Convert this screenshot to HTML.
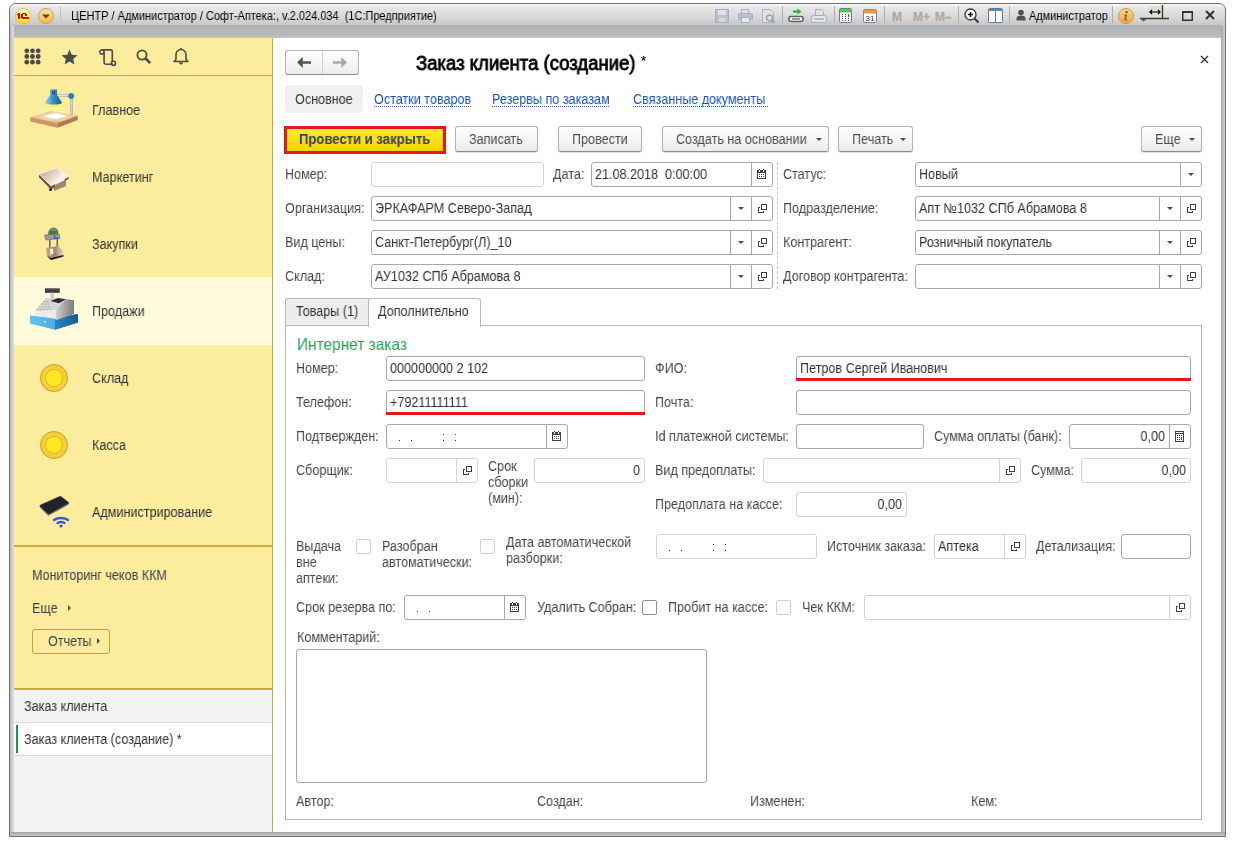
<!DOCTYPE html><html><head><meta charset="utf-8"><style>
html,body{margin:0;padding:0}
body{width:1238px;height:844px;position:relative;overflow:hidden;background:#fff;font-family:"Liberation Sans",sans-serif}
.a{position:absolute;box-sizing:border-box}
.t{position:absolute;white-space:pre;line-height:20px;transform-origin:0 0;will-change:transform;font-family:"Liberation Sans",sans-serif}
</style></head><body>
<div class="a" style="left:9px;top:3px;width:1217px;height:834px;border:1px solid #6f6f6f;border-radius:7px 7px 0 0;background:#c6c6c8"></div>
<div class="a" style="left:10px;top:25px;width:4px;height:807px;background:linear-gradient(90deg,#bdbdbf,#c9c9cb 2px,#dcdcdc 3px)"></div>
<div class="a" style="left:1221px;top:25px;width:4px;height:807px;background:linear-gradient(90deg,#a4a5a9,#b6b7bb 2px,#cdcdcf 3px)"></div>
<div class="a" style="left:10px;top:4px;width:1215px;height:22px;border-radius:6px 6px 0 0;background:linear-gradient(#fbfbfb,#e8e8e8 3px,#d8d8d9 60%,#c5c5c7)"></div>
<div class="a" style="left:14px;top:25px;width:1207px;height:13px;background:linear-gradient(#adaeb2,#b5b6ba 40%,#b9babd 85%,#c6c7ca)"></div>
<div class="a" style="left:10px;top:832px;width:1215px;height:4px;background:linear-gradient(#9fa0a4,#b4b5b9 50%,#c9c9cc)"></div>
<div class="t" style="left:71px;top:6px;font-size:12px;transform:scaleX(.915);color:#000">ЦЕНТР / Администратор / Софт-Аптека:, v.2.024.034  (1С:Предприятие)</div>
<div class="a" style="left:14px;top:38px;width:259px;height:651px;background:#fbec9e"></div>
<div class="a" style="left:272px;top:38px;width:1px;height:794px;background:#c9ad3a"></div>
<div class="a" style="left:14px;top:75px;width:258px;height:1px;background:#c9ad3a"></div>
<div class="a" style="left:14px;top:277px;width:258px;height:68px;background:#fffcdc"></div>
<div class="a" style="left:14px;top:545px;width:258px;height:2px;background:#c9ad3a"></div>
<div class="a" style="left:14px;top:688px;width:258px;height:2px;background:#c9ad3a"></div>
<div class="a" style="left:14px;top:690px;width:258px;height:142px;background:#f2f2f2"></div>
<div class="a" style="left:14px;top:722px;width:258px;height:1px;background:#dadada"></div>
<div class="a" style="left:14px;top:723px;width:258px;height:32px;background:#fff"></div>
<div class="a" style="left:14px;top:755px;width:258px;height:1px;background:#dadada"></div>
<div class="a" style="left:16px;top:725px;width:2px;height:28px;background:#149b4a"></div>
<div class="t" style="left:92px;top:100px;font-size:14px;transform:scaleX(.9);color:#333;">Главное</div>
<div class="t" style="left:92px;top:167px;font-size:14px;transform:scaleX(.9);color:#333;">Маркетинг</div>
<div class="t" style="left:92px;top:234px;font-size:14px;transform:scaleX(.9);color:#333;">Закупки</div>
<div class="t" style="left:92px;top:301px;font-size:14px;transform:scaleX(.9);color:#333;">Продажи</div>
<div class="t" style="left:92px;top:368px;font-size:14px;transform:scaleX(.9);color:#333;">Склад</div>
<div class="t" style="left:92px;top:435px;font-size:14px;transform:scaleX(.9);color:#333;">Касса</div>
<div class="t" style="left:92px;top:502px;font-size:14px;transform:scaleX(.9);color:#333;">Администрирование</div>
<div class="t" style="left:32px;top:565px;font-size:14px;transform:scaleX(.9);color:#3d4152;">Мониторинг чеков ККМ</div>
<div class="t" style="left:32px;top:598px;font-size:14px;transform:scaleX(.9);color:#3d4152;">Еще</div>
<div class="a" style="left:32px;top:629px;width:78px;height:25px;border:1px solid #c4a31a;border-radius:3px"></div>
<div class="t" style="left:48px;top:631px;font-size:14px;transform:scaleX(.9);color:#3d4152;">Отчеты</div>
<div class="t" style="left:24px;top:696px;font-size:14px;transform:scaleX(.9);color:#333;">Заказ клиента</div>
<div class="t" style="left:24px;top:729px;font-size:14px;transform:scaleX(.9);color:#333;">Заказ клиента (создание) *</div>
<div class="a" style="left:273px;top:38px;width:948px;height:794px;background:#fff"></div>
<div class="a" style="left:285px;top:50px;width:74px;height:25px;border:1px solid #b3b3b3;border-bottom-color:#8c8c8c;border-radius:3px;background:linear-gradient(#fff,#ececec)"></div>
<div class="a" style="left:322px;top:51px;width:1px;height:23px;background:#d0d0d0"></div>
<div class="t" style="left:416px;top:48px;line-height:30px;font-size:19.5px;transform:scaleX(.95);-webkit-text-stroke:.8px #000;color:#000">Заказ клиента (создание)</div>
<div class="t" style="left:641px;top:51px;line-height:20px;font-size:13px;color:#000;-webkit-text-stroke:.2px #000">*</div>
<svg class="a" style="left:1200px;top:55px" width="9" height="9" viewBox="0 0 9 9"><path d="M1 1l7 7M8 1l-7 7" stroke="#333" stroke-width="1.3"/></svg>
<div class="a" style="left:285px;top:85px;width:78px;height:28px;background:#f0f0f0;border-radius:4px"></div>
<div class="t" style="left:295px;top:89px;font-size:14px;transform:scaleX(.9);color:#333;">Основное</div>
<div class="t" style="left:374px;top:89px;font-size:14px;transform:scaleX(.9);color:#1c4fc0">Остатки товаров</div>
<div class="a" style="left:374px;top:106px;width:98px;height:1px;background:repeating-linear-gradient(90deg,#3a6ad0 0 1px,transparent 1px 2px)"></div>
<div class="t" style="left:492px;top:89px;font-size:14px;transform:scaleX(.9);color:#1c4fc0">Резервы по заказам</div>
<div class="a" style="left:492px;top:106px;width:117px;height:1px;background:repeating-linear-gradient(90deg,#3a6ad0 0 1px,transparent 1px 2px)"></div>
<div class="t" style="left:633px;top:89px;font-size:14px;transform:scaleX(.9);color:#1c4fc0">Связанные документы</div>
<div class="a" style="left:633px;top:106px;width:135px;height:1px;background:repeating-linear-gradient(90deg,#3a6ad0 0 1px,transparent 1px 2px)"></div>
<div class="a" style="left:284px;top:126px;width:162px;height:28px;border:3px solid #e5161d;background:linear-gradient(#ffe930,#f5d400)"></div>
<div class="t" style="left:299px;top:129px;font-size:14px;font-weight:bold;transform:scaleX(.935);color:#3b3f58">Провести и закрыть</div>
<div class="a" style="left:455px;top:126px;width:83px;height:26px;border:1px solid #b3b3b3;border-bottom-color:#8c8c8c;border-radius:3px;background:linear-gradient(#fff,#ececec);box-shadow:0 1px 1px rgba(0,0,0,.12)"></div>
<div class="t" style="left:469px;top:129px;font-size:14px;transform:scaleX(.9);color:#4d4d4d;">Записать</div>
<div class="a" style="left:558px;top:126px;width:84px;height:26px;border:1px solid #b3b3b3;border-bottom-color:#8c8c8c;border-radius:3px;background:linear-gradient(#fff,#ececec);box-shadow:0 1px 1px rgba(0,0,0,.12)"></div>
<div class="t" style="left:572px;top:129px;font-size:14px;transform:scaleX(.9);color:#4d4d4d;">Провести</div>
<div class="a" style="left:662px;top:126px;width:167px;height:26px;border:1px solid #b3b3b3;border-bottom-color:#8c8c8c;border-radius:3px;background:linear-gradient(#fff,#ececec);box-shadow:0 1px 1px rgba(0,0,0,.12)"></div>
<div class="t" style="left:676px;top:129px;font-size:14px;transform:scaleX(.9);color:#4d4d4d;">Создать на основании</div>
<div class="a" style="left:816px;top:138px;width:0;height:0;border-left:3px solid transparent;border-right:3px solid transparent;border-top:3px solid #4d4d4d"></div>
<div class="a" style="left:838px;top:126px;width:75px;height:26px;border:1px solid #b3b3b3;border-bottom-color:#8c8c8c;border-radius:3px;background:linear-gradient(#fff,#ececec);box-shadow:0 1px 1px rgba(0,0,0,.12)"></div>
<div class="t" style="left:852px;top:129px;font-size:14px;transform:scaleX(.9);color:#4d4d4d;">Печать</div>
<div class="a" style="left:900px;top:138px;width:0;height:0;border-left:3px solid transparent;border-right:3px solid transparent;border-top:3px solid #4d4d4d"></div>
<div class="a" style="left:1141px;top:126px;width:61px;height:26px;border:1px solid #b3b3b3;border-bottom-color:#8c8c8c;border-radius:3px;background:linear-gradient(#fff,#ececec);box-shadow:0 1px 1px rgba(0,0,0,.12)"></div>
<div class="t" style="left:1155px;top:129px;font-size:14px;transform:scaleX(.9);color:#4d4d4d;">Еще</div>
<div class="a" style="left:1189px;top:138px;width:0;height:0;border-left:3px solid transparent;border-right:3px solid transparent;border-top:3px solid #4d4d4d"></div>
<div class="t" style="left:285px;top:164px;font-size:14px;transform:scaleX(.9);color:#474747;">Номер:</div>
<div class="a" style="left:371px;top:162px;width:173px;height:25px;border:1px solid #d4d4d4;border-radius:3px;background:#fff"></div>
<div class="t" style="left:553px;top:164px;font-size:14px;transform:scaleX(.9);color:#474747;">Дата:</div>
<div class="a" style="left:591px;top:162px;width:182px;height:25px;border:1px solid #a8a8a8;border-radius:3px;background:#fff"></div>
<div class="a" style="left:751px;top:163px;width:1px;height:23px;background:#a8a8a8"></div>
<div class="a" style="left:757px;top:169px;line-height:0"><svg width="9" height="10" viewBox="0 0 9 10" shape-rendering="crispEdges"><rect x="0.5" y="1.5" width="8" height="8" fill="#fff" stroke="#404040"/><rect x="0" y="1" width="9" height="3" fill="#404040"/><rect x="2" y="1" width="1" height="2" fill="#fff"/><rect x="6" y="1" width="1" height="2" fill="#fff"/><rect x="2" y="0" width="1" height="1" fill="#404040"/><rect x="6" y="0" width="1" height="1" fill="#404040"/><path d="M2 5.5h1M4 5.5h1M6 5.5h1M2 7.5h1M4 7.5h1M6 7.5h1" stroke="#404040"/></svg></div>
<div class="t" style="left:595px;top:164px;font-size:14px;transform:scaleX(.9);color:#333;">21.08.2018  0:00:00</div>
<div class="a" style="left:777px;top:162px;width:1px;height:127px;border-left:1px dashed #c8c8c8"></div>
<div class="t" style="left:783px;top:164px;font-size:14px;transform:scaleX(.9);color:#474747;">Статус:</div>
<div class="a" style="left:915px;top:162px;width:287px;height:25px;border:1px solid #a8a8a8;border-radius:3px;background:#fff"></div>
<div class="a" style="left:1180px;top:163px;width:1px;height:23px;background:#a8a8a8"></div>
<div class="a" style="left:1188px;top:173px;width:0;height:0;border-left:3px solid transparent;border-right:3px solid transparent;border-top:3px solid #4d4d4d"></div>
<div class="t" style="left:919px;top:164px;font-size:14px;transform:scaleX(.9);color:#333;">Новый</div>
<div class="t" style="left:285px;top:198px;font-size:14px;transform:scaleX(.9);color:#474747;">Организация:</div>
<div class="a" style="left:371px;top:196px;width:402px;height:25px;border:1px solid #a8a8a8;border-radius:3px;background:#fff"></div>
<div class="a" style="left:751px;top:197px;width:1px;height:23px;background:#a8a8a8"></div>
<div class="a" style="left:757px;top:203px;line-height:0"><svg width="10" height="10" viewBox="0 0 10 10" shape-rendering="crispEdges"><path d="M3 4.5H1.5V9.5H6.5V8" fill="none" stroke="#404040"/><rect x="4.5" y="1.5" width="5" height="5" fill="none" stroke="#404040"/></svg></div>
<div class="a" style="left:730px;top:197px;width:1px;height:23px;background:#a8a8a8"></div>
<div class="a" style="left:738px;top:207px;width:0;height:0;border-left:3px solid transparent;border-right:3px solid transparent;border-top:3px solid #4d4d4d"></div>
<div class="t" style="left:375px;top:198px;font-size:14px;transform:scaleX(.9);color:#333;">ЭРКАФАРМ Северо-Запад</div>
<div class="t" style="left:783px;top:198px;font-size:14px;transform:scaleX(.9);color:#474747;">Подразделение:</div>
<div class="a" style="left:915px;top:196px;width:287px;height:25px;border:1px solid #a8a8a8;border-radius:3px;background:#fff"></div>
<div class="a" style="left:1180px;top:197px;width:1px;height:23px;background:#a8a8a8"></div>
<div class="a" style="left:1186px;top:203px;line-height:0"><svg width="10" height="10" viewBox="0 0 10 10" shape-rendering="crispEdges"><path d="M3 4.5H1.5V9.5H6.5V8" fill="none" stroke="#404040"/><rect x="4.5" y="1.5" width="5" height="5" fill="none" stroke="#404040"/></svg></div>
<div class="a" style="left:1159px;top:197px;width:1px;height:23px;background:#a8a8a8"></div>
<div class="a" style="left:1167px;top:207px;width:0;height:0;border-left:3px solid transparent;border-right:3px solid transparent;border-top:3px solid #4d4d4d"></div>
<div class="t" style="left:919px;top:198px;font-size:14px;transform:scaleX(.9);color:#333;">Апт №1032 СПб Абрамова 8</div>
<div class="t" style="left:285px;top:232px;font-size:14px;transform:scaleX(.9);color:#474747;">Вид цены:</div>
<div class="a" style="left:371px;top:230px;width:402px;height:25px;border:1px solid #a8a8a8;border-radius:3px;background:#fff"></div>
<div class="a" style="left:751px;top:231px;width:1px;height:23px;background:#a8a8a8"></div>
<div class="a" style="left:757px;top:237px;line-height:0"><svg width="10" height="10" viewBox="0 0 10 10" shape-rendering="crispEdges"><path d="M3 4.5H1.5V9.5H6.5V8" fill="none" stroke="#404040"/><rect x="4.5" y="1.5" width="5" height="5" fill="none" stroke="#404040"/></svg></div>
<div class="a" style="left:730px;top:231px;width:1px;height:23px;background:#a8a8a8"></div>
<div class="a" style="left:738px;top:241px;width:0;height:0;border-left:3px solid transparent;border-right:3px solid transparent;border-top:3px solid #4d4d4d"></div>
<div class="t" style="left:375px;top:232px;font-size:14px;transform:scaleX(.9);color:#333;">Санкт-Петербург(Л)_10</div>
<div class="t" style="left:783px;top:232px;font-size:14px;transform:scaleX(.9);color:#474747;">Контрагент:</div>
<div class="a" style="left:915px;top:230px;width:287px;height:25px;border:1px solid #a8a8a8;border-radius:3px;background:#fff"></div>
<div class="a" style="left:1180px;top:231px;width:1px;height:23px;background:#a8a8a8"></div>
<div class="a" style="left:1186px;top:237px;line-height:0"><svg width="10" height="10" viewBox="0 0 10 10" shape-rendering="crispEdges"><path d="M3 4.5H1.5V9.5H6.5V8" fill="none" stroke="#404040"/><rect x="4.5" y="1.5" width="5" height="5" fill="none" stroke="#404040"/></svg></div>
<div class="a" style="left:1159px;top:231px;width:1px;height:23px;background:#a8a8a8"></div>
<div class="a" style="left:1167px;top:241px;width:0;height:0;border-left:3px solid transparent;border-right:3px solid transparent;border-top:3px solid #4d4d4d"></div>
<div class="t" style="left:919px;top:232px;font-size:14px;transform:scaleX(.9);color:#333;">Розничный покупатель</div>
<div class="t" style="left:285px;top:266px;font-size:14px;transform:scaleX(.9);color:#474747;">Склад:</div>
<div class="a" style="left:371px;top:264px;width:402px;height:25px;border:1px solid #a8a8a8;border-radius:3px;background:#fff"></div>
<div class="a" style="left:751px;top:265px;width:1px;height:23px;background:#a8a8a8"></div>
<div class="a" style="left:757px;top:271px;line-height:0"><svg width="10" height="10" viewBox="0 0 10 10" shape-rendering="crispEdges"><path d="M3 4.5H1.5V9.5H6.5V8" fill="none" stroke="#404040"/><rect x="4.5" y="1.5" width="5" height="5" fill="none" stroke="#404040"/></svg></div>
<div class="a" style="left:730px;top:265px;width:1px;height:23px;background:#a8a8a8"></div>
<div class="a" style="left:738px;top:275px;width:0;height:0;border-left:3px solid transparent;border-right:3px solid transparent;border-top:3px solid #4d4d4d"></div>
<div class="t" style="left:375px;top:266px;font-size:14px;transform:scaleX(.9);color:#333;">АУ1032 СПб Абрамова 8</div>
<div class="t" style="left:783px;top:266px;font-size:14px;transform:scaleX(.9);color:#474747;">Договор контрагента:</div>
<div class="a" style="left:915px;top:264px;width:287px;height:25px;border:1px solid #a8a8a8;border-radius:3px;background:#fff"></div>
<div class="a" style="left:1180px;top:265px;width:1px;height:23px;background:#a8a8a8"></div>
<div class="a" style="left:1186px;top:271px;line-height:0"><svg width="10" height="10" viewBox="0 0 10 10" shape-rendering="crispEdges"><path d="M3 4.5H1.5V9.5H6.5V8" fill="none" stroke="#404040"/><rect x="4.5" y="1.5" width="5" height="5" fill="none" stroke="#404040"/></svg></div>
<div class="a" style="left:1159px;top:265px;width:1px;height:23px;background:#a8a8a8"></div>
<div class="a" style="left:1167px;top:275px;width:0;height:0;border-left:3px solid transparent;border-right:3px solid transparent;border-top:3px solid #4d4d4d"></div>
<div class="a" style="left:285px;top:298px;width:84px;height:28px;border:1px solid #b8b8b8;border-right:none;border-radius:3px 0 0 0;background:#ececec"></div>
<div class="a" style="left:368px;top:298px;width:113px;height:29px;border:1px solid #b8b8b8;border-bottom:none;border-radius:3px 3px 0 0;background:#fff"></div>
<div class="t" style="left:296px;top:301px;font-size:14px;transform:scaleX(.9);color:#333;">Товары (1)</div>
<div class="t" style="left:378px;top:301px;font-size:14px;transform:scaleX(.9);color:#333;">Дополнительно</div>
<div class="a" style="left:285px;top:325px;width:917px;height:495px;border:1px solid #b8b8b8;border-top:none"></div>
<div class="a" style="left:480px;top:325px;width:722px;height:1px;background:#b8b8b8"></div>
<div class="t" style="left:297px;top:334px;font-size:16.5px;transform:scaleX(.936);color:#23a353">Интернет заказ</div>
<div class="t" style="left:296px;top:358px;font-size:14px;transform:scaleX(.9);color:#474747;">Номер:</div>
<div class="a" style="left:386px;top:356px;width:259px;height:25px;border:1px solid #a8a8a8;border-radius:3px;background:#fff"></div>
<div class="t" style="left:390px;top:358px;font-size:14px;transform:scaleX(.9);color:#333;">000000000 2 102</div>
<div class="t" style="left:655px;top:358px;font-size:14px;transform:scaleX(.9);color:#474747;">ФИО:</div>
<div class="a" style="left:796px;top:356px;width:395px;height:25px;border:1px solid #a8a8a8;border-radius:3px;background:#fff"></div>
<div class="t" style="left:800px;top:358px;font-size:14px;transform:scaleX(.9);color:#333;">Петров Сергей Иванович</div>
<div class="a" style="left:796px;top:378px;width:395px;height:3px;background:#e8141c"></div>
<div class="t" style="left:296px;top:392px;font-size:14px;transform:scaleX(.9);color:#474747;">Телефон:</div>
<div class="a" style="left:386px;top:390px;width:259px;height:25px;border:1px solid #a8a8a8;border-radius:3px;background:#fff"></div>
<div class="t" style="left:390px;top:392px;font-size:14px;transform:scaleX(.9);color:#333;">+79211111111</div>
<div class="a" style="left:386px;top:412px;width:259px;height:3px;background:#e8141c"></div>
<div class="t" style="left:655px;top:392px;font-size:14px;transform:scaleX(.9);color:#474747;">Почта:</div>
<div class="a" style="left:796px;top:390px;width:395px;height:25px;border:1px solid #a8a8a8;border-radius:3px;background:#fff"></div>
<div class="t" style="left:296px;top:426px;font-size:14px;transform:scaleX(.9);color:#474747;">Подтвержден:</div>
<div class="a" style="left:386px;top:424px;width:182px;height:25px;border:1px solid #a8a8a8;border-radius:3px;background:#fff"></div>
<div class="a" style="left:546px;top:425px;width:1px;height:23px;background:#a8a8a8"></div>
<div class="a" style="left:552px;top:431px;line-height:0"><svg width="9" height="10" viewBox="0 0 9 10" shape-rendering="crispEdges"><rect x="0.5" y="1.5" width="8" height="8" fill="#fff" stroke="#404040"/><rect x="0" y="1" width="9" height="3" fill="#404040"/><rect x="2" y="1" width="1" height="2" fill="#fff"/><rect x="6" y="1" width="1" height="2" fill="#fff"/><rect x="2" y="0" width="1" height="1" fill="#404040"/><rect x="6" y="0" width="1" height="1" fill="#404040"/><path d="M2 5.5h1M4 5.5h1M6 5.5h1M2 7.5h1M4 7.5h1M6 7.5h1" stroke="#404040"/></svg></div>
<div class="a" style="left:399px;top:440px;width:1px;height:1px;background:#333"></div>
<div class="a" style="left:411px;top:440px;width:1px;height:1px;background:#333"></div>
<div class="a" style="left:443px;top:434px;width:1px;height:1px;background:#333"></div>
<div class="a" style="left:443px;top:440px;width:1px;height:1px;background:#333"></div>
<div class="a" style="left:455px;top:434px;width:1px;height:1px;background:#333"></div>
<div class="a" style="left:455px;top:440px;width:1px;height:1px;background:#333"></div>
<div class="t" style="left:655px;top:426px;font-size:14px;transform:scaleX(.9);color:#474747;">Id платежной системы:</div>
<div class="a" style="left:796px;top:424px;width:128px;height:25px;border:1px solid #a8a8a8;border-radius:3px;background:#fff"></div>
<div class="t" style="left:934px;top:426px;font-size:14px;transform:scaleX(.9);color:#474747;">Сумма оплаты (банк):</div>
<div class="a" style="left:1069px;top:424px;width:122px;height:25px;border:1px solid #a8a8a8;border-radius:3px;background:#fff"></div>
<div class="a" style="left:1169px;top:425px;width:1px;height:23px;background:#a8a8a8"></div>
<div class="a" style="left:1175px;top:431px;line-height:0"><svg width="9" height="11" viewBox="0 0 9 11" shape-rendering="crispEdges"><rect x="0.5" y="0.5" width="8" height="10" fill="#fff" stroke="#404040"/><path d="M0 2.5H9M2 4.5h1M4 4.5h1M6 4.5h1M2 6.5h1M4 6.5h1M2 8.5h1M4 8.5h1" stroke="#404040"/><rect x="6" y="6" width="1" height="3" fill="#404040"/></svg></div>
<div class="t" style="left:1069px;width:96px;text-align:right;top:426px;font-size:14px;transform:scaleX(.9);transform-origin:100% 0;color:#333">0,00</div>
<div class="t" style="left:296px;top:460px;font-size:14px;transform:scaleX(.9);color:#474747;">Сборщик:</div>
<div class="a" style="left:386px;top:458px;width:92px;height:25px;border:1px solid #d4d4d4;border-radius:3px;background:#fff"></div>
<div class="a" style="left:456px;top:459px;width:1px;height:23px;background:#d4d4d4"></div>
<div class="a" style="left:462px;top:465px;line-height:0"><svg width="10" height="10" viewBox="0 0 10 10" shape-rendering="crispEdges"><path d="M3 4.5H1.5V9.5H6.5V8" fill="none" stroke="#404040"/><rect x="4.5" y="1.5" width="5" height="5" fill="none" stroke="#404040"/></svg></div>
<div class="t" style="left:488px;top:456px;font-size:14px;transform:scaleX(.9);color:#474747;">Срок</div>
<div class="t" style="left:488px;top:472px;font-size:14px;transform:scaleX(.9);color:#474747;">сборки</div>
<div class="t" style="left:488px;top:488px;font-size:14px;transform:scaleX(.9);color:#474747;">(мин):</div>
<div class="a" style="left:534px;top:458px;width:111px;height:25px;border:1px solid #d4d4d4;border-radius:3px;background:#fff"></div>
<div class="t" style="left:534px;width:106px;text-align:right;top:460px;font-size:14px;transform:scaleX(.9);transform-origin:100% 0;color:#333">0</div>
<div class="t" style="left:655px;top:460px;font-size:14px;transform:scaleX(.9);color:#474747;">Вид предоплаты:</div>
<div class="a" style="left:763px;top:458px;width:258px;height:25px;border:1px solid #d4d4d4;border-radius:3px;background:#fff"></div>
<div class="a" style="left:999px;top:459px;width:1px;height:23px;background:#d4d4d4"></div>
<div class="a" style="left:1005px;top:465px;line-height:0"><svg width="10" height="10" viewBox="0 0 10 10" shape-rendering="crispEdges"><path d="M3 4.5H1.5V9.5H6.5V8" fill="none" stroke="#404040"/><rect x="4.5" y="1.5" width="5" height="5" fill="none" stroke="#404040"/></svg></div>
<div class="t" style="left:1031px;top:460px;font-size:14px;transform:scaleX(.9);color:#474747;">Сумма:</div>
<div class="a" style="left:1081px;top:458px;width:110px;height:25px;border:1px solid #d4d4d4;border-radius:3px;background:#fff"></div>
<div class="t" style="left:1081px;width:105px;text-align:right;top:460px;font-size:14px;transform:scaleX(.9);transform-origin:100% 0;color:#333">0,00</div>
<div class="t" style="left:655px;top:494px;font-size:14px;transform:scaleX(.9);color:#474747;">Предоплата на кассе:</div>
<div class="a" style="left:796px;top:492px;width:111px;height:25px;border:1px solid #d4d4d4;border-radius:3px;background:#fff"></div>
<div class="t" style="left:796px;width:106px;text-align:right;top:494px;font-size:14px;transform:scaleX(.9);transform-origin:100% 0;color:#333">0,00</div>
<div class="t" style="left:296px;top:536px;font-size:14px;transform:scaleX(.9);color:#474747;">Выдача</div>
<div class="t" style="left:296px;top:552px;font-size:14px;transform:scaleX(.9);color:#474747;">вне</div>
<div class="t" style="left:296px;top:568px;font-size:14px;transform:scaleX(.9);color:#474747;">аптеки:</div>
<div class="a" style="left:356px;top:539px;width:15px;height:15px;border:1px solid #d0d0d0;border-radius:2px;background:#fff"></div>
<div class="t" style="left:382px;top:536px;font-size:14px;transform:scaleX(.9);color:#474747;">Разобран</div>
<div class="t" style="left:382px;top:552px;font-size:14px;transform:scaleX(.9);color:#474747;">автоматически:</div>
<div class="a" style="left:480px;top:539px;width:15px;height:15px;border:1px solid #d0d0d0;border-radius:2px;background:#fff"></div>
<div class="t" style="left:506px;top:532px;font-size:14px;transform:scaleX(.9);color:#474747;">Дата автоматической</div>
<div class="t" style="left:506px;top:548px;font-size:14px;transform:scaleX(.9);color:#474747;">разборки:</div>
<div class="a" style="left:656px;top:534px;width:161px;height:25px;border:1px solid #d4d4d4;border-radius:3px;background:#fff"></div>
<div class="a" style="left:669px;top:550px;width:1px;height:1px;background:#333"></div>
<div class="a" style="left:681px;top:550px;width:1px;height:1px;background:#333"></div>
<div class="a" style="left:713px;top:544px;width:1px;height:1px;background:#333"></div>
<div class="a" style="left:713px;top:550px;width:1px;height:1px;background:#333"></div>
<div class="a" style="left:725px;top:544px;width:1px;height:1px;background:#333"></div>
<div class="a" style="left:725px;top:550px;width:1px;height:1px;background:#333"></div>
<div class="t" style="left:827px;top:536px;font-size:14px;transform:scaleX(.9);color:#474747;">Источник заказа:</div>
<div class="a" style="left:934px;top:534px;width:92px;height:25px;border:1px solid #d4d4d4;border-radius:3px;background:#fff"></div>
<div class="a" style="left:1004px;top:535px;width:1px;height:23px;background:#d4d4d4"></div>
<div class="a" style="left:1010px;top:541px;line-height:0"><svg width="10" height="10" viewBox="0 0 10 10" shape-rendering="crispEdges"><path d="M3 4.5H1.5V9.5H6.5V8" fill="none" stroke="#404040"/><rect x="4.5" y="1.5" width="5" height="5" fill="none" stroke="#404040"/></svg></div>
<div class="t" style="left:938px;top:536px;font-size:14px;transform:scaleX(.9);color:#333;">Аптека</div>
<div class="t" style="left:1036px;top:536px;font-size:14px;transform:scaleX(.9);color:#474747;">Детализация:</div>
<div class="a" style="left:1121px;top:534px;width:70px;height:25px;border:1px solid #a8a8a8;border-radius:3px;background:#fff"></div>
<div class="t" style="left:296px;top:597px;font-size:14px;transform:scaleX(.9);color:#474747;">Срок резерва по:</div>
<div class="a" style="left:404px;top:595px;width:122px;height:25px;border:1px solid #a8a8a8;border-radius:3px;background:#fff"></div>
<div class="a" style="left:504px;top:596px;width:1px;height:23px;background:#a8a8a8"></div>
<div class="a" style="left:510px;top:602px;line-height:0"><svg width="9" height="10" viewBox="0 0 9 10" shape-rendering="crispEdges"><rect x="0.5" y="1.5" width="8" height="8" fill="#fff" stroke="#404040"/><rect x="0" y="1" width="9" height="3" fill="#404040"/><rect x="2" y="1" width="1" height="2" fill="#fff"/><rect x="6" y="1" width="1" height="2" fill="#fff"/><rect x="2" y="0" width="1" height="1" fill="#404040"/><rect x="6" y="0" width="1" height="1" fill="#404040"/><path d="M2 5.5h1M4 5.5h1M6 5.5h1M2 7.5h1M4 7.5h1M6 7.5h1" stroke="#404040"/></svg></div>
<div class="a" style="left:417px;top:611px;width:1px;height:1px;background:#333"></div>
<div class="a" style="left:429px;top:611px;width:1px;height:1px;background:#333"></div>
<div class="t" style="left:537px;top:597px;font-size:14px;transform:scaleX(.9);color:#474747;">Удалить Собран:</div>
<div class="a" style="left:642px;top:600px;width:15px;height:15px;border:1px solid #8f8f8f;border-radius:2px;background:#fff"></div>
<div class="t" style="left:668px;top:597px;font-size:14px;transform:scaleX(.9);color:#474747;">Пробит на кассе:</div>
<div class="a" style="left:776px;top:600px;width:15px;height:15px;border:1px solid #d0d0d0;border-radius:2px;background:#fff"></div>
<div class="t" style="left:802px;top:597px;font-size:14px;transform:scaleX(.9);color:#474747;">Чек ККМ:</div>
<div class="a" style="left:864px;top:595px;width:327px;height:25px;border:1px solid #d4d4d4;border-radius:3px;background:#fff"></div>
<div class="a" style="left:1169px;top:596px;width:1px;height:23px;background:#d4d4d4"></div>
<div class="a" style="left:1175px;top:602px;line-height:0"><svg width="10" height="10" viewBox="0 0 10 10" shape-rendering="crispEdges"><path d="M3 4.5H1.5V9.5H6.5V8" fill="none" stroke="#404040"/><rect x="4.5" y="1.5" width="5" height="5" fill="none" stroke="#404040"/></svg></div>
<div class="t" style="left:297px;top:627px;font-size:14px;transform:scaleX(.9);color:#474747;">Комментарий:</div>
<div class="a" style="left:296px;top:649px;width:411px;height:134px;border:1px solid #a8a8a8;border-radius:3px;background:#fff"></div>
<div class="t" style="left:296px;top:791px;font-size:14px;transform:scaleX(.9);color:#474747;">Автор:</div>
<div class="t" style="left:537px;top:791px;font-size:14px;transform:scaleX(.9);color:#474747;">Создан:</div>
<div class="t" style="left:750px;top:791px;font-size:14px;transform:scaleX(.9);color:#474747;">Изменен:</div>
<div class="t" style="left:971px;top:791px;font-size:14px;transform:scaleX(.9);color:#474747;">Кем:</div>
<svg class="a" style="left:15px;top:8px" width="16" height="16" viewBox="0 0 16 16"><defs><linearGradient id="g1c" x1="0" y1="0" x2="0" y2="1"><stop offset="0" stop-color="#fff8c0"/><stop offset=".6" stop-color="#fff070"/><stop offset="1" stop-color="#ffdc00"/></linearGradient></defs><circle cx="8" cy="8" r="7.5" fill="url(#g1c)" stroke="#e6c24a"/><g fill="#e40010" shape-rendering="crispEdges"><rect x="3" y="5" width="2" height="6"/><rect x="2" y="6" width="1" height="1"/><rect x="6" y="6" width="2" height="4"/><rect x="7" y="5" width="4" height="1"/><rect x="10" y="6" width="2" height="2"/><rect x="7" y="9" width="7" height="2"/></g></svg>
<svg class="a" style="left:38px;top:8px" width="16" height="16" viewBox="0 0 16 16"><defs><linearGradient id="gor" x1="0" y1="0" x2="0" y2="1"><stop offset="0" stop-color="#ffe0a8"/><stop offset="1" stop-color="#ffb648"/></linearGradient></defs><circle cx="8" cy="8" r="7.5" fill="url(#gor)" stroke="#c9a04a"/><path d="M4 6.5h8l-4 4z" fill="#5a4526"/></svg>
<div class="a" style="left:60px;top:6px;width:1px;height:17px;background:#c4c4c4"></div>
<svg class="a" style="left:715px;top:9px" width="14" height="14" viewBox="0 0 14 14"><rect x="0.5" y="0.5" width="13" height="13" fill="#b9c3d0" stroke="#a4afbd"/><rect x="3" y="1" width="8" height="5" fill="#dfe4ea"/><rect x="4" y="9" width="6" height="4" fill="#d6e0d0"/></svg>
<svg class="a" style="left:738px;top:9px" width="15" height="14" viewBox="0 0 15 14"><rect x="3.5" y="0.5" width="7" height="4" fill="#dde2e8" stroke="#aab4c0"/><rect x="0.5" y="4.5" width="14" height="6" rx="1" fill="#b7c0cc" stroke="#a4afbd"/><rect x="3.5" y="8.5" width="8" height="5" fill="#e6e9ee" stroke="#aab4c0"/></svg>
<svg class="a" style="left:762px;top:9px" width="14" height="15" viewBox="0 0 14 15"><path d="M0.5 0.5h8l3 3v10h-11z" fill="#dde2e8" stroke="#aab4c0"/><circle cx="7.5" cy="9" r="3" fill="none" stroke="#9aa6b4" stroke-width="1.5"/><path d="M9.5 11l3 3" stroke="#9aa6b4" stroke-width="1.8"/></svg>
<div class="a" style="left:782px;top:6px;width:1px;height:17px;background:#b0b0b0"></div>
<svg class="a" style="left:788px;top:8px" width="16" height="16" viewBox="0 0 16 16"><path d="M5 3.5h6" stroke="#18c018" stroke-width="2.2"/><path d="M9.5 0.5l4 3-4 3z" fill="#18c018"/><rect x="1" y="8.5" width="14" height="5" rx="2" fill="#fff" stroke="#606060" stroke-width="1.6"/><rect x="4" y="10.2" width="8" height="1.6" fill="#808080"/></svg>
<svg class="a" style="left:811px;top:9px" width="16" height="15" viewBox="0 0 16 15"><path d="M4.5 0.5h6l2 2v4h-8z" fill="#dde2e8" stroke="#aab4c0"/><rect x="0.5" y="6.5" width="15" height="7" rx="2" fill="#e4e8ec" stroke="#a4afbd"/><rect x="3" y="9" width="10" height="2" fill="#b5bfcb"/></svg>
<div class="a" style="left:834px;top:6px;width:1px;height:17px;background:#b0b0b0"></div>
<svg class="a" style="left:839px;top:8px" width="13" height="15" viewBox="0 0 13 15"><rect x="0.5" y="0.5" width="12" height="14" rx="1" fill="#f4f4f4" stroke="#707a84"/><rect x="1" y="1" width="11" height="3.5" fill="#58c858"/><path d="M3 6.5h1M6 6.5h1M9 6.5h1M3 8.5h1M6 8.5h1M9 8.5h1M3 10.5h1M6 10.5h1M9 10.5h1M3 12.5h1M6 12.5h1M9 12.5h1" stroke="#505050"/><rect x="9" y="6" width="1" height="2" fill="#e02020"/></svg>
<svg class="a" style="left:863px;top:8px" width="14" height="15" viewBox="0 0 14 15"><rect x="0.5" y="1.5" width="13" height="13" rx="1.5" fill="#fafafa" stroke="#808a94"/><rect x="1" y="2" width="12" height="3.5" fill="#e09a50"/><text x="7" y="13" font-family="Liberation Sans" font-size="8" text-anchor="middle" fill="#333">31</text></svg>
<div class="a" style="left:884px;top:6px;width:1px;height:17px;background:#b0b0b0"></div>
<div class="t" style="left:892px;top:7px;font-size:12px;font-weight:bold;color:#b5a89d;-webkit-text-stroke:.3px #b5a89d">M</div>
<div class="t" style="left:913px;top:7px;font-size:12px;font-weight:bold;color:#b5a89d;-webkit-text-stroke:.3px #b5a89d">M+</div>
<div class="t" style="left:935px;top:7px;font-size:12px;font-weight:bold;color:#b5a89d;-webkit-text-stroke:.3px #b5a89d">M&#8211;</div>
<div class="a" style="left:958px;top:6px;width:1px;height:17px;background:#b0b0b0"></div>
<svg class="a" style="left:964px;top:8px" width="16" height="16" viewBox="0 0 16 16"><circle cx="6.5" cy="6.5" r="5.5" fill="#fafafa" stroke="#333" stroke-width="1.3"/><path d="M4 6.5h5M6.5 4v5" stroke="#111" stroke-width="1.4"/><path d="M10.5 10.5l4 4" stroke="#333" stroke-width="2"/></svg>
<svg class="a" style="left:988px;top:8px" width="15" height="15" viewBox="0 0 15 15"><rect x="0.5" y="0.5" width="14" height="14" rx="1" fill="#fff" stroke="#6c7a88"/><rect x="1" y="1" width="13" height="2" fill="#4a90d8"/><rect x="7" y="3" width="1" height="11" fill="#6c7a88"/></svg>
<div class="a" style="left:1009px;top:6px;width:1px;height:17px;background:#b0b0b0"></div>
<svg class="a" style="left:1016px;top:9px" width="10" height="12" viewBox="0 0 10 12"><circle cx="5" cy="3.5" r="2.8" fill="#505050"/><path d="M0.5 11.5v-2a4.5 3 0 0 1 9 0v2z" fill="#505050"/></svg>
<div class="t" style="left:1029px;top:6px;font-size:12px;transform:scaleX(.91);color:#000">Администратор</div>
<div class="a" style="left:1112px;top:6px;width:1px;height:17px;background:#b0b0b0"></div>
<svg class="a" style="left:1118px;top:8px" width="16" height="16" viewBox="0 0 16 16"><defs><linearGradient id="ginf" x1="0" y1="0" x2="0" y2="1"><stop offset="0" stop-color="#ffd890"/><stop offset="1" stop-color="#f0a830"/></linearGradient></defs><circle cx="8" cy="8" r="7.5" fill="url(#ginf)" stroke="#d09a3a"/><circle cx="8.5" cy="4" r="1.3" fill="#6a6a6a"/><path d="M6 6.5h3.2l-1.2 5h1.5v1h-3.5l1.2-5h-1.2z" fill="#6a6a6a"/></svg>
<svg class="a" style="left:1140px;top:5px" width="30" height="17" viewBox="0 0 30 17"><rect x="8" y="1" width="14" height="12" fill="#e2ddd4"/><path d="M10 7h10M12 5l-2 2 2 2M18 5l2 2-2 2" fill="none" stroke="#000" stroke-width="1.2"/><path d="M22.5 0v13.5M0 13.5h29" stroke="#3a3a3a" stroke-width="1.4"/><path d="M0 13.5h7l-3.5 3z" fill="#505050"/></svg>
<svg class="a" style="left:1182px;top:11px" width="11" height="10" viewBox="0 0 11 10"><rect x="0.75" y="1" width="9.5" height="8.25" fill="none" stroke="#333" stroke-width="1.5"/><rect x="0" y="0" width="11" height="2" fill="#333"/></svg>
<svg class="a" style="left:1205px;top:10px" width="10" height="10" viewBox="0 0 10 10"><path d="M1 1l8 8M9 1l-8 8" stroke="#333" stroke-width="2"/></svg>
<svg class="a" style="left:24px;top:48px" width="17" height="17" viewBox="0 0 17 17"><circle cx="2.8" cy="2.8" r="2.4" fill="#4a4a4a"/><circle cx="8.5" cy="2.8" r="2.4" fill="#4a4a4a"/><circle cx="14.2" cy="2.8" r="2.4" fill="#4a4a4a"/><circle cx="2.8" cy="8.5" r="2.4" fill="#4a4a4a"/><circle cx="8.5" cy="8.5" r="2.4" fill="#4a4a4a"/><circle cx="14.2" cy="8.5" r="2.4" fill="#4a4a4a"/><circle cx="2.8" cy="14.2" r="2.4" fill="#4a4a4a"/><circle cx="8.5" cy="14.2" r="2.4" fill="#4a4a4a"/><circle cx="14.2" cy="14.2" r="2.4" fill="#4a4a4a"/></svg>
<svg class="a" style="left:61px;top:49px" width="17" height="16" viewBox="0 0 17 16"><path d="M8.5 0.5l2.2 5.3 5.8.4-4.4 3.7 1.4 5.6-5-3.1-5 3.1 1.4-5.6-4.4-3.7 5.8-.4z" fill="#4a4a4a"/></svg>
<svg class="a" style="left:99px;top:49px" width="18" height="18" viewBox="0 0 18 18"><circle cx="3" cy="3" r="2.1" fill="none" stroke="#4a4a4a" stroke-width="1.5"/><path d="M3 0.9h8.5a1.8 1.8 0 0 1 1.8 1.8v10.3M5.1 3v10.5a1.8 1.8 0 0 0 1.8 1.8h7.1" fill="none" stroke="#4a4a4a" stroke-width="1.6"/><circle cx="14.5" cy="14.3" r="2.1" fill="none" stroke="#4a4a4a" stroke-width="1.5"/></svg>
<svg class="a" style="left:136px;top:49px" width="16" height="16" viewBox="0 0 16 16"><circle cx="6" cy="6" r="4.6" fill="none" stroke="#4a4a4a" stroke-width="1.8"/><path d="M9.2 9.2l5 5" stroke="#4a4a4a" stroke-width="2.6"/></svg>
<svg class="a" style="left:173px;top:48px" width="16" height="18" viewBox="0 0 16 18"><path d="M8 1.5a5 5 0 0 1 5 5v5l2 2h-14l2-2v-5a5 5 0 0 1 5-5z" fill="none" stroke="#4a4a4a" stroke-width="1.6" stroke-linejoin="round"/><path d="M6 14.5a2 2 0 0 0 4 0z" fill="#4a4a4a"/><rect x="7.2" y="0" width="1.6" height="2" fill="#4a4a4a"/></svg>
<svg class="a" style="left:29px;top:88px" width="50" height="42" viewBox="0 0 50 42"><defs><linearGradient id="gsh" x1="0" y1="0" x2="1" y2="0"><stop offset="0" stop-color="#9ad6f2"/><stop offset=".45" stop-color="#3a92c6"/><stop offset="1" stop-color="#1a5a8a"/></linearGradient><linearGradient id="glt" x1="0" y1="0" x2="0" y2="1"><stop offset="0" stop-color="#fff060"/><stop offset="1" stop-color="#fff8c8" stop-opacity=".5"/></linearGradient><radialGradient id="gbt" cx=".5" cy=".45" r=".6"><stop offset="0" stop-color="#fff6e0"/><stop offset=".5" stop-color="#ecd0a4"/><stop offset="1" stop-color="#d8b080"/></radialGradient></defs><path d="M15 16.5h18l4 8h-26z" fill="url(#glt)"/><rect x="41.3" y="8" width="2.4" height="19" fill="#d4d4dc" stroke="#9a9aa6" stroke-width=".5"/><rect x="27" y="6.2" width="14" height="2.4" fill="#e4e4ec" stroke="#9a9aa6" stroke-width=".5"/><circle cx="42.1" cy="8" r="3" fill="#2a80b8"/><path d="M21.2 1.4h6.8v5.6l5 7.5q0 2-8.5 2t-8.5-2l5.2-7.5z" fill="url(#gsh)"/><rect x="23.2" y="3" width="1" height="3.5" fill="#1a4a70"/><rect x="25" y="3" width="1" height="3.5" fill="#1a4a70"/><path d="M1.3 29.3l20.2-6.3 27.2 4.8-20.1 7.1z" fill="url(#gbt)"/><path d="M1.3 29.3l27.3 5.6v4.8l-27.3-6.2z" fill="#cc9462"/><path d="M28.6 34.9l20.1-7.1v4.2l-20.1 7.7z" fill="#b27a4a"/><path d="M15 28l12-3 11 3-12 3z" fill="#fff"/></svg>
<svg class="a" style="left:38px;top:166px" width="32" height="26" viewBox="0 0 32 26"><defs><linearGradient id="gsc" x1="0" y1="0" x2="1" y2=".6"><stop offset="0" stop-color="#bfa08e"/><stop offset=".55" stop-color="#e6d6cc"/><stop offset=".8" stop-color="#faf6f2"/><stop offset="1" stop-color="#e8dcd4"/></linearGradient></defs><path d="M16 19.5l12-6v6.5l-12 5z" fill="#a08870"/><path d="M1 8.2v3l11.9 12.3v-3.7z" fill="#6e5040"/><path d="M12.9 19.8v3.7l4-2.1v-3.7z" fill="#7a5c48"/><path d="M26.6 12.5l4-2.1v2.6l-4 2.1z" fill="#7a5c48"/><path d="M1 8.2l17.5-6.4 12.1 8.6-17.7 9.4z" fill="url(#gsc)" stroke="#fff" stroke-width=".6"/><circle cx="12.5" cy="23.5" r="1.5" fill="#1a1a1a"/></svg>
<svg class="a" style="left:44px;top:227px" width="22" height="34" viewBox="0 0 22 34"><defs><linearGradient id="gpan" x1="0" y1="0" x2="1" y2="0"><stop offset="0" stop-color="#c8a890"/><stop offset=".5" stop-color="#a88468"/><stop offset="1" stop-color="#e8e0d8"/></linearGradient></defs><path d="M4.5 7.5q0-6.5 5-6.5t4.5 6.5z" fill="#7c7c78" stroke="#4a4a48" stroke-width=".6"/><rect x="6" y="4" width="6.5" height="2.6" fill="#1e8a44"/><path d="M0.5 8l14.5-1 1 4.5-14 1.5z" fill="#a09c96" stroke="#5e5a56" stroke-width=".6"/><path d="M9.5 10l1-2.5 1 2.5z" fill="#2a48c8"/><rect x="10" y="10.5" width="4" height="1.4" fill="#2a48c8"/><rect x="5" y="13" width="1.6" height="8" fill="#6e6a66"/><rect x="12.5" y="12" width="1.6" height="8" fill="#6e6a66"/><path d="M2 21l12-2 6 5-0.5 5.5-12.5 3.5-4-4z" fill="url(#gpan)"/><path d="M6 22l3-0.5 0.5 6.5-3 0.5z" fill="#f4f0ec"/><path d="M7 27.5l5-1v1l-5 1z" fill="#3a9a50"/><path d="M3 29l4 4 12.5-3.5v-1.5l-12.5 3z" fill="#1a1410"/></svg>
<svg class="a" style="left:30px;top:287px" width="50" height="44" viewBox="0 0 50 44"><defs><linearGradient id="gbd" x1="0" y1="0" x2="1" y2="0"><stop offset="0" stop-color="#62c2f0"/><stop offset="1" stop-color="#3a9ad8"/></linearGradient><linearGradient id="gbr" x1="0" y1="0" x2="1" y2="0"><stop offset="0" stop-color="#2c84c4"/><stop offset="1" stop-color="#155a94"/></linearGradient><linearGradient id="gside" x1="0" y1="0" x2="1" y2="0"><stop offset="0" stop-color="#d0d0d0"/><stop offset="1" stop-color="#7a7a7a"/></linearGradient><linearGradient id="gdisp" x1="0" y1="0" x2="0" y2="1"><stop offset="0" stop-color="#5a5a5a"/><stop offset="1" stop-color="#2a2a2a"/></linearGradient></defs><rect x="15" y="1.2" width="14.8" height="4.6" fill="url(#gdisp)"/><rect x="21" y="5.8" width="2.4" height="5" fill="#d8d8d8" stroke="#9a9a9a" stroke-width=".4"/><path d="M0 28.5l25 2.5 23-3.9v8.5l-23 7.2-25-6.4z" fill="url(#gbd)"/><path d="M25 31l23-3.9v8.5l-23 7.2z" fill="url(#gbr)"/><circle cx="15" cy="35" r=".9" fill="#e0f0f8"/><path d="M25.6 23l10.4-11 8 1.3v13.8l-18.4 6.2z" fill="url(#gside)"/><path d="M4.6 24.3l11.7-13.5 19.7 1.2-10.4 11z" fill="#d6d6d6"/><path d="M4.6 24.3l21 -1.3v9l-21-3.5z" fill="#ececec"/><path d="M20.5 14l7.5-3 8 1.2-7 4z" fill="#2e2e2e"/><g fill="#a8a8a8"><circle cx="10" cy="20" r=".8"/><circle cx="13" cy="20" r=".8"/><circle cx="16" cy="20" r=".8"/><circle cx="19" cy="20" r=".8"/><circle cx="12" cy="17" r=".8"/><circle cx="15" cy="17" r=".8"/><circle cx="18" cy="17" r=".8"/><circle cx="14" cy="14.5" r=".8"/><circle cx="17" cy="14.5" r=".8"/><circle cx="8" cy="22.5" r=".8"/><circle cx="11" cy="22.5" r=".8"/><circle cx="14" cy="22.5" r=".8"/><circle cx="17" cy="22.5" r=".8"/><circle cx="20" cy="22.5" r=".8"/></g></svg>
<svg class="a" style="left:40px;top:364px" width="28" height="28" viewBox="0 0 28 28"><circle cx="14" cy="14" r="13.5" fill="#f8cc3c" stroke="#c9a024"/><circle cx="14" cy="14" r="8.5" fill="#ffe81e" stroke="#d8b020" stroke-width=".8"/></svg>
<svg class="a" style="left:40px;top:431px" width="28" height="28" viewBox="0 0 28 28"><circle cx="14" cy="14" r="13.5" fill="#f8cc3c" stroke="#c9a024"/><circle cx="14" cy="14" r="8.5" fill="#ffe81e" stroke="#d8b020" stroke-width=".8"/></svg>
<svg class="a" style="left:39px;top:496px" width="32" height="32" viewBox="0 0 32 32"><path d="M1.5 10.5l19-8.5q1-.4 1.8.2l7.2 5.6q.8.7-.2 1.2l-19 10.5q-1 .5-1.7-.3l-7.6-7.4q-.6-.8.5-1.3z" fill="#8c8c98"/><path d="M1.5 9l19-8.5q1-.4 1.8.2l7.2 5.6q.8.7-.2 1.2l-19 10.5q-1 .5-1.7-.3l-7.6-7.4q-.6-.8.5-1.3z" fill="#222228" stroke="#44444c" stroke-width=".6"/><path d="M15 24a9 5.5 0 0 1 14 0" fill="none" stroke="#3a5ed0" stroke-width="2.4" stroke-linecap="round"/><path d="M18.5 27a5 3 0 0 1 7 0" fill="none" stroke="#3a5ed0" stroke-width="2.4" stroke-linecap="round"/><circle cx="22" cy="30" r="1.6" fill="#3a5ed0"/></svg>
<div class="a" style="left:68px;top:605px;width:0;height:0;border-top:3px solid transparent;border-bottom:3px solid transparent;border-left:3px solid #4d4d4d"></div>
<div class="a" style="left:97px;top:638px;width:0;height:0;border-top:3px solid transparent;border-bottom:3px solid transparent;border-left:3px solid #4d4d4d"></div>
<svg class="a" style="left:296px;top:56px" width="52" height="12" viewBox="0 0 52 12"><path d="M1 6.3l5.8-5.3v4.2h8.2v2.6h-8.2v4.2z" fill="#555"/><path d="M51 6.3l-5.8-5.3v4.2h-8.2v2.6h8.2v4.2z" fill="#aaa"/></svg>
</body></html>
